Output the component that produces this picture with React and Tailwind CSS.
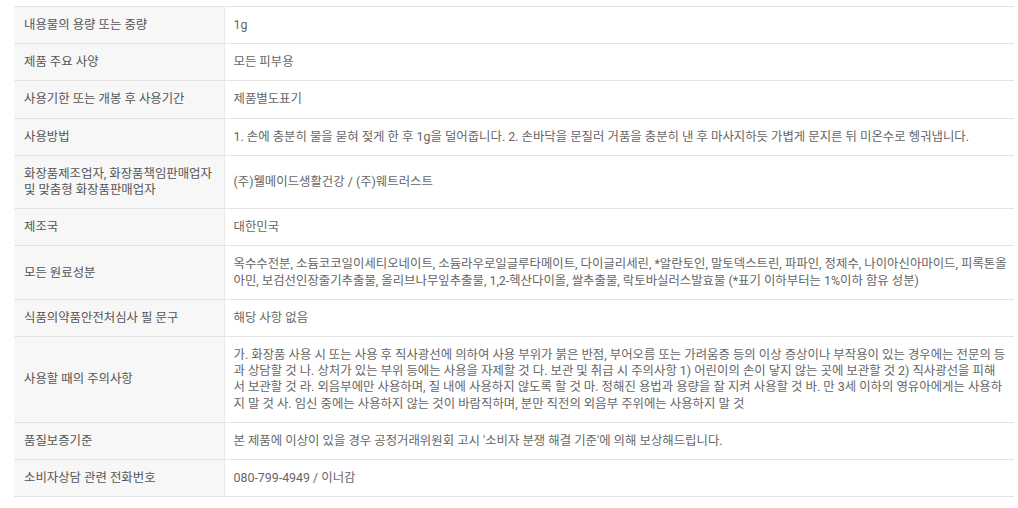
const rows = [
  ['내용물의 용량 또는 중량', '1g'],
  ['제품 주요 사양', '모든 피부용'],
  ['사용기한 또는 개봉 후 사용기간', '제품별도표기'],
  ['사용방법', '1. 손에 충분히 물을 묻혀 젖게 한 후 1g을 덜어줍니다. 2. 손바닥을 문질러 거품을 충분히 낸 후 마사지하듯 가볍게 문지른 뒤 미온수로 헹궈냅니다.'],
  [['화장품제조업자, 화장품책임판매업자', '및 맞춤형 화장품판매업자'], '(주)웰메이드생활건강 / (주)웨트러스트'],
  ['제조국', '대한민국'],
  ['모든 원료성분', '옥수수전분, 소듐코코일이세티오네이트, 소듐라우로일글루타메이트, 다이글리세린, *알란토인, 말토덱스트린, 파파인, 정제수, 나이아신아마이드, 피록톤올아민, 보검선인장줄기추출물, 올리브나무잎추출물, 1,2-헥산다이올, 쌀추출물, 락토바실러스발효물 (*표기 이하부터는 1%이하 함유 성분)'],
  ['식품의약품안전처심사 필 문구', '해당 사항 없음'],
  ['사용할 때의 주의사항', [
    '가. 화장품 사용 시 또는 사용 후 직사광선에 의하여 사용 부위가 붉은 반점, 부어오름 또는 가려움증 등의 이상 증상이나 부작용이 있는 경우에는 전문의 등',
    '과 상담할 것 나. 상처가 있는 부위 등에는 사용을 자제할 것 다. 보관 및 취급 시 주의사항 1) 어린이의 손이 닿지 않는 곳에 보관할 것 2) 직사광선을 피해',
    '서 보관할 것 라. 외음부에만 사용하며, 질 내에 사용하지 않도록 할 것 마. 정해진 용법과 용량을 잘 지켜 사용할 것 바. 만 3세 이하의 영유아에게는 사용하',
    '지 말 것 사. 임신 중에는 사용하지 않는 것이 바람직하며, 분만 직전의 외음부 주위에는 사용하지 말 것',
  ]],
  ['품질보증기준', "본 제품에 이상이 있을 경우 공정거래위원회 고시 '소비자 분쟁 해결 기준'에 의해 보상해드립니다."],
  ['소비자상담 관련 전화번호', '080-799-4949 / 이너감'],
];

const Lines = ({ content }) =>
  Array.isArray(content)
    ? content.map((line, i) => (
        <div key={i} className="whitespace-nowrap">{line}</div>
      ))
    : content;

export default function App() {
  return (
    <div className="bg-white w-[1018px] h-[508px] pt-[6px] px-[14px] font-['Roboto','Noto_Sans_CJK_KR',sans-serif] text-[12.4px]">
      <table className="w-[1000px] border-collapse table-fixed border-t border-[#e3e3e3]">
        <colgroup>
          <col className="w-[210px]" />
          <col />
        </colgroup>
        <tbody>
          {rows.map(([label, value], idx) => (
            <tr key={idx} className="border-b border-[#e3e3e3]">
              <th className="bg-[#f7f7f7] text-left font-normal text-[#555] pl-[10px] pr-[6px] py-[10px] leading-[16.2px] align-middle border-r border-[#e8e8e8]">
                <Lines content={label} />
              </th>
              <td className="text-[#666] pl-[9px] pr-[5px] py-[10px] leading-[16.2px] align-middle break-all">
                <Lines content={value} />
              </td>
            </tr>
          ))}
        </tbody>
      </table>
    </div>
  );
}
